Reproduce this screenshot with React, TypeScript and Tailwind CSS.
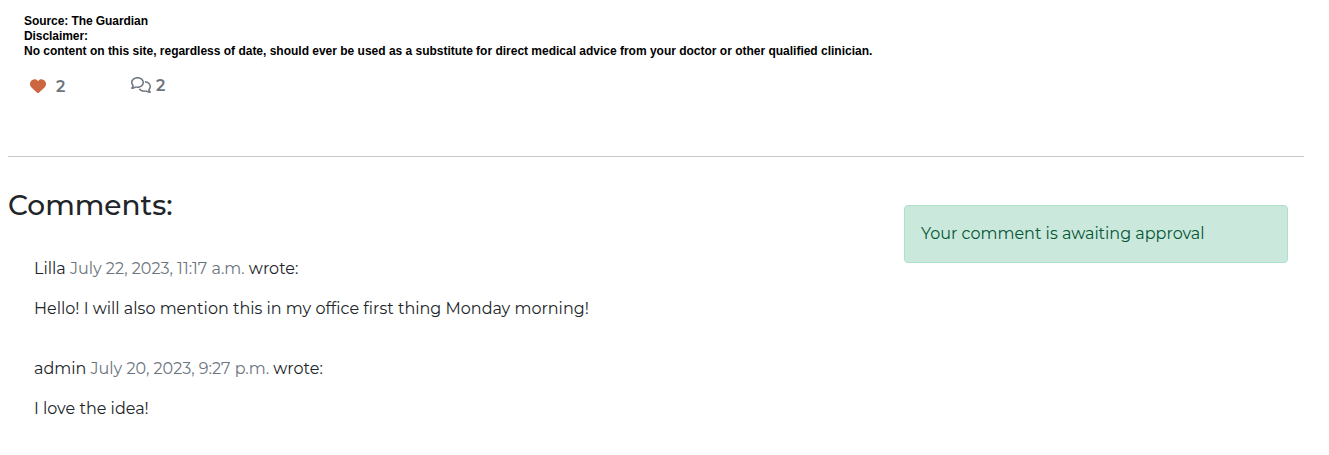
import React from "react";
import { FaHeart, FaRegComments } from "react-icons/fa6";

interface CommentProps {
  author: string;
  date: string;
  body: string;
}

function Comment({ author, date, body }: CommentProps) {
  return (
    <div className="h-[100px]">
      <p className="h-6 whitespace-nowrap">
        {author} <span className="text-[#6c757d]">{date}</span> wrote:
      </p>
      <p className="mt-4 h-6 whitespace-nowrap">{body}</p>
    </div>
  );
}

export default function App() {
  return (
    <div className="h-[455px] w-full overflow-hidden bg-white pl-2 pr-[25px] pt-3.5 font-['Montserrat','Inter',sans-serif] text-base leading-6 text-[#212529]">
      <div className="pl-4 font-['Liberation_Sans',sans-serif] text-[12px] font-bold leading-[15px] tracking-[-0.008px] text-black">
        <p className="tracking-[-0.07px]">Source: The Guardian</p>
        <p className="tracking-[-0.07px]">Disclaimer:</p>
        <p className="whitespace-nowrap">No content on this site, regardless of date, should ever be used as a substitute for direct medical advice from your doctor or other qualified clinician.</p>
      </div>
      <div className="flex h-[97px] pl-[22px] pt-4 text-[#6c757d]">
        <div className="flex h-6 w-[101px] items-center">
          <FaHeart className="-mt-0.5 text-[#cc6640]" />
          <span className="ml-2.5 font-semibold">2</span>
        </div>
        <div className="-mt-px flex h-6 items-center">
          <FaRegComments size={20} className="-mt-0.5" />
          <span className="ml-[5px] font-semibold">2</span>
        </div>
      </div>
      <div className="h-px bg-[#c8c9ca]" />
      <div className="flex justify-between">
        <div className="pt-[31px]">
          <h3 className="text-[28px] font-medium leading-[34px]">Comments:</h3>
          <div className="pl-[26px] pt-[35px]">
            <Comment author="Lilla" date="July 22, 2023, 11:17 a.m." body="Hello! I will also mention this in my office first thing Monday morning!" />
            <Comment author="admin" date="July 20, 2023, 9:27 p.m." body="I love the idea!" />
          </div>
        </div>
        <div className="mr-4 mt-12 h-[58px] w-96 rounded border border-[#addfca] bg-[#cbe8dc] p-4 text-[#055637]">Your comment is awaiting approval</div>
      </div>
    </div>
  );
}
